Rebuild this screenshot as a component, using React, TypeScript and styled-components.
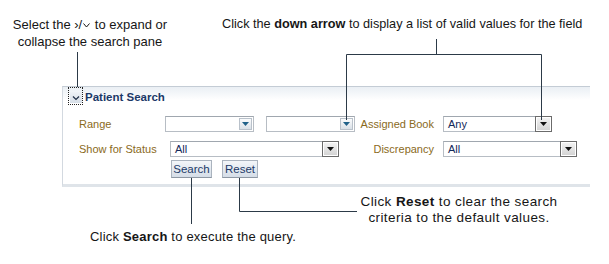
import * as React from 'react';
import styled, { createGlobalStyle, css } from 'styled-components';

const GlobalStyle = createGlobalStyle`
	html, body {
		margin: 0;
		padding: 0;
		background: #ffffff;
	}
	body {
		font-family: "Liberation Sans", Arial, sans-serif;
	}
`;

const Page = styled.div`
	position: relative;
	width: 609px;
	height: 264px;
	overflow: hidden;
	background: #ffffff;
	color: #161616;
	font-size: 12px;
`;

const TopRow = styled.div`
	display: flex;
	flex-direction: row;
	height: 86px;
`;

const Note = styled.div`
	font-family: "Liberation Sans", Arial, sans-serif;
	font-size: 13px;
	line-height: 17px;
	color: #161616;
	white-space: nowrap;

	b {
		font-weight: bold;
	}
`;

const ToggleNote = styled(Note)`
	width: 180px;
	padding-top: 16px;
	text-align: center;
`;

const ArrowNote = styled(Note)`
	margin-left: 42px;
	padding-top: 16px;
	font-size: 12.7px;
`;

const GlyphChevron = styled.svg`
	display: inline-block;
	vertical-align: 1px;
	margin: 0 1px;
`;

const Panel = styled.div`
	margin-left: 62px;
	width: 528px;
	box-sizing: border-box;
	border-top: 1px solid #c4ccd5;
	border-left: 1px solid #d3d9e0;
	border-bottom: 3px solid #dfe4e9;
	font-family: "Liberation Sans", Tahoma, sans-serif;
	font-size: 11px;
`;

const PanelHeader = styled.div`
	display: flex;
	flex-direction: row;
	align-items: center;
	height: 19px;
	padding-left: 5px;
	background: linear-gradient(#eaeff4, #ffffff 70%);
`;

const Toggle = styled.div`
	display: flex;
	align-items: flex-end;
	justify-content: center;
	width: 15px;
	height: 18px;
	box-sizing: border-box;
	border: 1px dotted #222;
	padding-bottom: 1px;
	align-self: flex-start;
`;

const ToggleIcon = styled.div`
	display: flex;
	align-items: center;
	justify-content: center;
	width: 12px;
	height: 11px;
	background: linear-gradient(#eef2f6, #d6dee7);
`;

const Title = styled.div`
	margin-left: 2px;
	font-size: 11.5px;
	font-weight: bold;
	color: #1c3968;
`;

const PanelBody = styled.div`
	display: flex;
	flex-direction: column;
	padding: 10px 0 6px 16px;
`;

const FieldRow = styled.div<{ $gap: number }>`
	display: flex;
	flex-direction: row;
	align-items: center;
	height: 16px;
	margin-bottom: ${(p) => p.$gap}px;
`;

const LeftPart = styled.div`
	display: flex;
	flex-direction: row;
	align-items: center;
	width: 276px;
`;

const Label = styled.div<{ $width: number; $right?: boolean }>`
	width: ${(p) => p.$width}px;
	flex-shrink: 0;
	color: #8a6a1c;
	white-space: nowrap;
	text-align: ${(p) => (p.$right ? 'right' : 'left')};
`;

const RightLabel = styled(Label)`
	margin-right: 9px;
`;

const SelectBox = styled.div<{ $width: number; $gapLeft?: number }>`
	display: flex;
	flex-direction: row;
	align-items: center;
	width: ${(p) => p.$width}px;
	height: 16px;
	margin-left: ${(p) => p.$gapLeft || 0}px;
	box-sizing: border-box;
	border: 1px solid #b7bdc4;
	border-top-color: #a0a7af;
	background: #ffffff;
`;

const SelectValue = styled.div`
	flex: 1;
	padding-left: 4px;
	color: #15295a;
	white-space: nowrap;
	overflow: hidden;
`;

const ArrowButton = styled.div<{ $dark?: boolean }>`
	display: flex;
	align-items: center;
	justify-content: center;
	box-sizing: border-box;
	${(p) =>
		p.$dark
			? css`
					width: 17px;
					height: 16px;
					margin: 0 -1px 0 0;
					border: 1px solid #6b6b6b;
					box-shadow: inset 0 0 0 1px #ffffff;
					background: linear-gradient(#f4f4f4, #d2d2d2);
			  `
			: css`
					width: 13px;
					height: 12px;
					margin-right: 1px;
					border: 1px solid #b9c1ca;
					background: linear-gradient(#fbfcfd, #d9e0e7);
			  `}
`;

const ButtonRow = styled.div`
	display: flex;
	flex-direction: row;
	gap: 10px;
	margin-left: 92px;
	margin-top: 3px;
`;

const Button = styled.div<{ $width: number }>`
	display: flex;
	align-items: center;
	justify-content: center;
	width: ${(p) => p.$width}px;
	height: 18px;
	box-sizing: border-box;
	border: 1px solid #aab3be;
	border-bottom-color: #8d97a3;
	background: linear-gradient(#f3f6f9, #d5dde7);
	color: #1c3968;
	font-size: 11.5px;
`;

const BottomArea = styled.div`
	display: flex;
	flex-direction: column;
`;

const ResetNote = styled(Note)`
	width: 202px;
	margin-left: 358px;
	padding-top: 7px;
	font-size: 13.5px;
	line-height: 16px;
	letter-spacing: 0.4px;
	text-align: center;
`;

const SearchNote = styled(Note)`
	margin-left: 90px;
	margin-top: 3px;
	line-height: 16px;
	letter-spacing: 0.2px;
`;

const Connectors = styled.svg`
	position: absolute;
	left: 0;
	top: 0;
	pointer-events: none;
`;

interface ISelectProps {
	width: number;
	value?: string;
	dark?: boolean;
	gapLeft?: number;
}

const DownArrow = ({ color }: { color: string }) => (
	<svg width="7" height="4" viewBox="0 0 7 4">
		<polygon points="0,0 7,0 3.5,4" fill={color} />
	</svg>
);

const Select = ({ width, value, dark, gapLeft }: ISelectProps) => (
	<SelectBox $width={width} $gapLeft={gapLeft}>
		<SelectValue>{value}</SelectValue>
		<ArrowButton $dark={dark}>
			<DownArrow color={dark ? '#111111' : '#1f6189'} />
		</ArrowButton>
	</SelectBox>
);

const lines = [
	// expand / collapse toggle
	'M77.5 52 V87',
	// down arrow bracket
	'M436.5 39 V54.5 M346.5 54.5 H541.5 M346.5 54.5 V120 M541.5 54.5 V120',
	// search button
	'M191.5 178 V224',
	// reset button
	'M239.5 178 V211.5 H357',
];

export default function App() {
	return (
		<Page>
			<GlobalStyle />
			<TopRow>
				<ToggleNote>
					Select the ›/
					<GlyphChevron width="7" height="5" viewBox="0 0 7 5">
						<polyline points="0.5,0.5 3.5,4 6.5,0.5" fill="none" stroke="#161616" strokeWidth="1" />
					</GlyphChevron>{' '}
					to expand or
					<br />
					collapse the search pane
				</ToggleNote>
				<ArrowNote>
					Click the <b>down arrow</b> to display a list of valid values for the field
				</ArrowNote>
			</TopRow>
			<Panel>
				<PanelHeader>
					<Toggle>
						<ToggleIcon>
							<svg width="8" height="6" viewBox="0 0 8 6">
								<polyline points="1,1.5 4,4.5 7,1.5" fill="none" stroke="#1e2d45" strokeWidth="1.2" />
							</svg>
						</ToggleIcon>
					</Toggle>
					<Title>Patient Search</Title>
				</PanelHeader>
				<PanelBody>
					<FieldRow $gap={9}>
						<LeftPart>
							<Label $width={86}>Range</Label>
							<Select width={89} />
							<Select width={89} gapLeft={12} />
						</LeftPart>
						<RightLabel $width={79} $right>Assigned Book</RightLabel>
						<Select width={109} value="Any" dark />
					</FieldRow>
					<FieldRow $gap={0}>
						<LeftPart>
							<Label $width={91}>Show for Status</Label>
							<Select width={169} value="All" dark />
						</LeftPart>
						<RightLabel $width={79} $right>Discrepancy</RightLabel>
						<Select width={134} value="All" dark />
					</FieldRow>
					<ButtonRow>
						<Button $width={41}>Search</Button>
						<Button $width={36}>Reset</Button>
					</ButtonRow>
				</PanelBody>
			</Panel>
			<BottomArea>
				<ResetNote>
					Click <b>Reset</b> to clear the search
					<br />
					criteria to the default values.
				</ResetNote>
				<SearchNote>
					Click <b>Search</b> to execute the query.
				</SearchNote>
			</BottomArea>
			<Connectors width="609" height="264" viewBox="0 0 609 264">
				{lines.map((d, idx) => (
					<path key={idx} d={d} fill="none" stroke="#2c3a48" strokeWidth="1" />
				))}
			</Connectors>
		</Page>
	);
}
